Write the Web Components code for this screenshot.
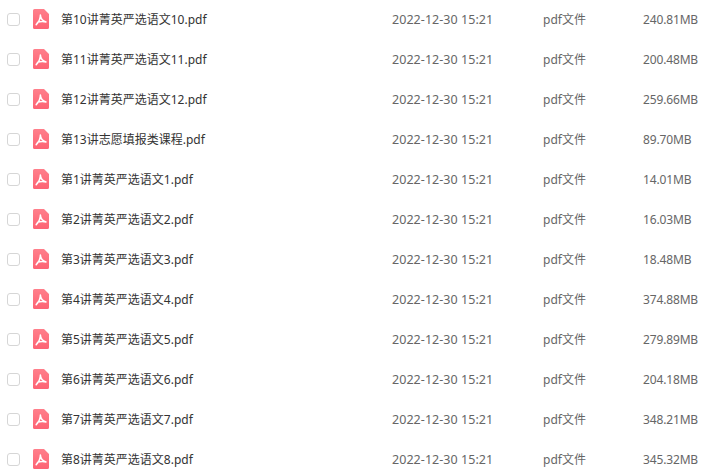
<!DOCTYPE html>
<html>
<head>
<meta charset="utf-8">
<style>
  html, body { margin: 0; background: #fff; overflow: hidden; }
  body { font-family: "Noto Sans", "Noto Sans CJK SC", sans-serif; }
</style>
</head>
<body>
<file-list></file-list>
<script>
class PdfIcon extends HTMLElement {
  connectedCallback() {
    this.attachShadow({ mode: 'open' });
    this.shadowRoot.innerHTML = `
      <style>
        :host { display: block; width: 16px; height: 20px; }
        svg { display: block; }
      </style>
      <svg width="16" height="20" viewBox="0 0 16 20">
        <defs>
          <linearGradient id="g" x1="0" y1="0" x2="0" y2="1">
            <stop offset="0" stop-color="#ff7f8b"/>
            <stop offset="1" stop-color="#fd6373"/>
          </linearGradient>
        </defs>
        <path d="M1.5 0H11L16 5V18.5A1.5 1.5 0 0 1 14.5 20H1.5A1.5 1.5 0 0 1 0 18.5V1.5A1.5 1.5 0 0 1 1.5 0Z" fill="url(#g)"/>
        <path d="M7.4 6C7.4 9 6 12.8 3.2 15.6M7.4 6C7.6 9.5 9.6 12 13 12.9M4.4 13.4C7 12.4 10 12.2 13 12.9" fill="none" stroke="#fff" stroke-width="1.5" stroke-linecap="round"/>
      </svg>`;
  }
}
customElements.define('pdf-icon', PdfIcon);

class FileRow extends HTMLElement {
  connectedCallback() {
    this.attachShadow({ mode: 'open' });
    this.shadowRoot.innerHTML = `
      <style>
        :host {
          display: grid;
          grid-template-columns: 33px 28px 331px 151px 100px 1fr;
          align-items: center;
          height: 40px;
          font-size: 12px;
          line-height: 18px;
          color: #666;
        }
        .check {
          box-sizing: border-box;
          width: 13px;
          height: 13px;
          margin-left: 7px;
          border: 1px solid #d6d6d6;
          border-radius: 3px;
          background: #fff;
        }
        .text { padding-top: 2px; }
        .name { color: #333; }
        .date { font-size: 12.5px; letter-spacing: 0.05px; }
        .size { letter-spacing: -0.15px; }
      </style>
      <div class="check"></div>
      <pdf-icon></pdf-icon>
      <div class="text name">${this.getAttribute('name')}</div>
      <div class="text date">2022-12-30 15:21</div>
      <div class="text">pdf文件</div>
      <div class="text size">${this.getAttribute('size')}</div>`;
  }
}
customElements.define('file-row', FileRow);

class FileList extends HTMLElement {
  connectedCallback() {
    this.attachShadow({ mode: 'open' });
    const files = [
      ['第10讲菁英严选语文10.pdf', '240.81MB'],
      ['第11讲菁英严选语文11.pdf', '200.48MB'],
      ['第12讲菁英严选语文12.pdf', '259.66MB'],
      ['第13讲志愿填报类课程.pdf', '89.70MB'],
      ['第1讲菁英严选语文1.pdf', '14.01MB'],
      ['第2讲菁英严选语文2.pdf', '16.03MB'],
      ['第3讲菁英严选语文3.pdf', '18.48MB'],
      ['第4讲菁英严选语文4.pdf', '374.88MB'],
      ['第5讲菁英严选语文5.pdf', '279.89MB'],
      ['第6讲菁英严选语文6.pdf', '204.18MB'],
      ['第7讲菁英严选语文7.pdf', '348.21MB'],
      ['第8讲菁英严选语文8.pdf', '345.32MB']
    ];
    this.shadowRoot.innerHTML = `
      <style>
        :host { display: block; margin-top: -1px; }
      </style>
      ${files.map(f => `<file-row name="${f[0]}" size="${f[1]}"></file-row>`).join('')}`;
  }
}
customElements.define('file-list', FileList);
</script>
</body>
</html>
